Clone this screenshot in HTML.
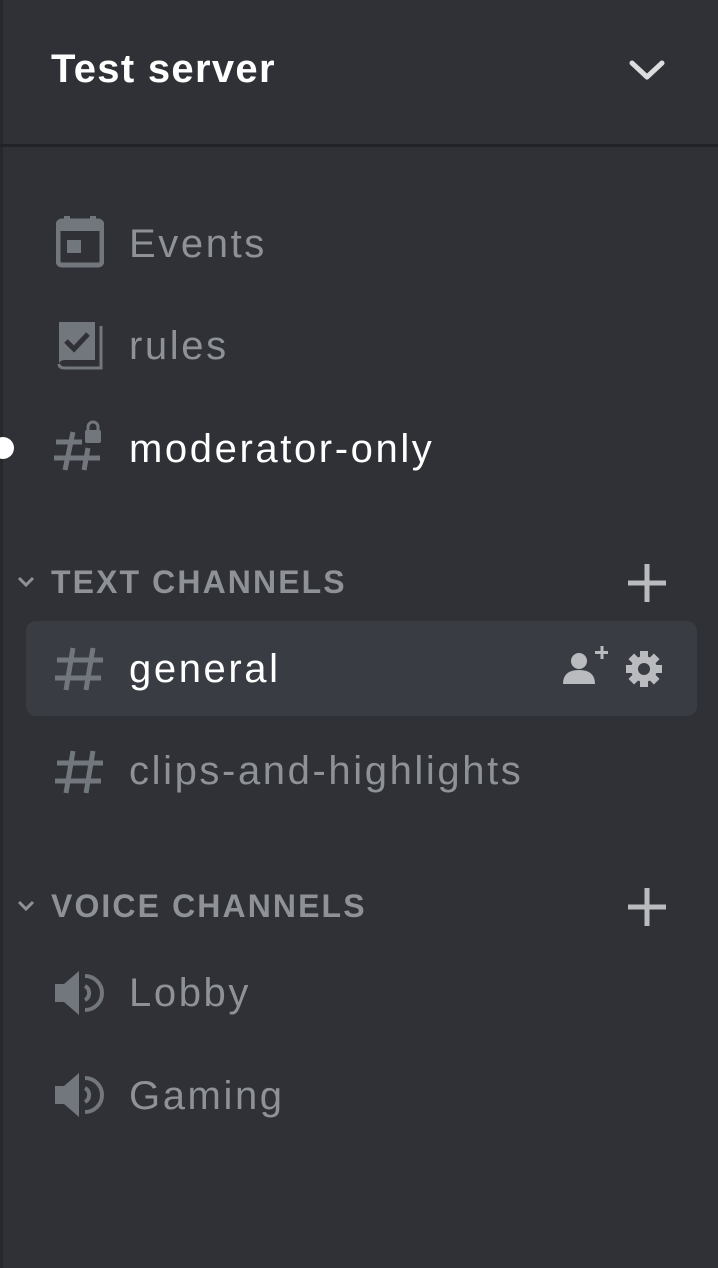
<!DOCTYPE html>
<html><head><meta charset="utf-8"><style>
html,body{margin:0;padding:0}
body{width:718px;height:1268px;background:#2f3136;position:relative;overflow:hidden;font-family:"Liberation Sans",sans-serif}
.lb{position:absolute;left:0;top:0;width:3px;height:1268px;background:#26282c}
.hdr{position:absolute;left:0;top:0;width:718px;height:144px;border-bottom:3px solid #202225}
.t{position:absolute;white-space:nowrap}
.title{left:51px;top:47px;font-size:40px;font-weight:bold;color:#fff;letter-spacing:1.3px}
.ch{font-size:40px;color:#8e9297;left:129px;line-height:46px;letter-spacing:2.6px}
.cat{font-size:32px;font-weight:bold;color:#8e9297;left:51px;line-height:36px;letter-spacing:2.1px}
.ic{position:absolute}
.sel{position:absolute;left:26px;top:621px;width:671px;height:95px;border-radius:10px;background:#393c43}
</style></head><body>
<div class="lb"></div>
<div class="hdr"></div>
<div class="t title">Test server</div>
<svg class="ic" style="left:628px;top:58px" width="38" height="26" viewBox="0 0 38 26"><path d="M4 5 L19 19 L34 5" stroke="#dcddde" stroke-width="5" fill="none" stroke-linecap="round" stroke-linejoin="round"/></svg>

<svg class="ic" style="left:56px;top:214px" width="48" height="54" viewBox="0 0 48 54"><rect x="2" y="7" width="44" height="44" rx="4" fill="none" stroke="#72767d" stroke-width="5"/><rect x="2" y="7" width="44" height="10" fill="#72767d"/><rect x="8" y="2" width="6" height="8" fill="#72767d"/><rect x="34" y="2" width="6" height="8" fill="#72767d"/><rect x="11" y="26" width="14" height="13" fill="#72767d"/></svg>
<div class="t ch" style="top:221px">Events</div>

<svg class="ic" style="left:57px;top:320px" width="46" height="50" viewBox="0 0 46 50"><path d="M2 2 H38 V40 H8 Q2 40 2 45 Z" fill="#72767d"/><path d="M2 44 Q2 48 8 48 H44 V6" stroke="#72767d" stroke-width="3" fill="none"/><path d="M9 21 L17 29 L31 14" stroke="#2f3136" stroke-width="5" fill="none"/></svg>
<div class="t ch" style="top:323px">rules</div>

<div style="position:absolute;left:-8px;top:437px;width:22px;height:22px;border-radius:50%;background:#fff"></div>
<svg class="ic" style="left:54px;top:420px" width="52" height="52" viewBox="0 0 52 52"><g stroke="#72767d" stroke-width="5" fill="none"><path d="M19 12 L11 50"/><path d="M34 28 L30 50"/><path d="M2 22 H28"/><path d="M0 38 H46"/></g><rect x="31" y="10" width="16" height="13" rx="2" fill="#72767d"/><path d="M34 11 V7 A5 5 0 0 1 44 7 V11" stroke="#72767d" stroke-width="3" fill="none"/></svg>
<div class="t ch" style="top:426px;color:#fff">moderator-only</div>

<svg class="ic" style="left:17px;top:576px" width="18" height="12" viewBox="0 0 18 12"><path d="M2 2 L9 9 L16 2" stroke="#8e9297" stroke-width="3" fill="none"/></svg>
<div class="t cat" style="top:564px">TEXT CHANNELS</div>
<svg class="ic" style="left:628px;top:564px" width="38" height="38" viewBox="0 0 38 38"><path d="M19 0 V38 M0 19 H38" stroke="#b9bbbe" stroke-width="5"/></svg>

<div class="sel"></div>
<svg class="ic" style="left:55px;top:646px" width="50" height="46" viewBox="0 0 50 46"><g stroke="#72767d" stroke-width="5" fill="none"><path d="M18 2 L11 44"/><path d="M38 2 L31 44"/><path d="M2 14 H48"/><path d="M0 32 H46"/></g></svg>
<div class="t ch" style="top:646px;color:#fff">general</div>
<svg class="ic" style="left:562px;top:644px" width="48" height="42" viewBox="0 0 48 42"><circle cx="17" cy="17" r="8" fill="#b9bbbe"/><path d="M1 40 Q1 26 17 26 Q33 26 33 40 Z" fill="#b9bbbe"/><path d="M40 2 V15 M33 8.5 H46" stroke="#b9bbbe" stroke-width="3"/></svg>
<svg class="ic" style="left:626px;top:651px" width="36" height="36" viewBox="0 0 36 36"><g fill="#b9bbbe"><circle cx="18" cy="18" r="13"/><rect x="14" y="0" width="8" height="36"/><rect x="0" y="14" width="36" height="8"/><rect x="14" y="0" width="8" height="36" transform="rotate(45 18 18)"/><rect x="14" y="0" width="8" height="36" transform="rotate(-45 18 18)"/></g><circle cx="18" cy="18" r="6" fill="#393c43"/></svg>

<svg class="ic" style="left:55px;top:749px" width="50" height="46" viewBox="0 0 50 46"><g stroke="#72767d" stroke-width="5" fill="none"><path d="M18 2 L11 44"/><path d="M38 2 L31 44"/><path d="M2 14 H48"/><path d="M0 32 H46"/></g></svg>
<div class="t ch" style="top:748px">clips-and-highlights</div>

<svg class="ic" style="left:17px;top:900px" width="18" height="12" viewBox="0 0 18 12"><path d="M2 2 L9 9 L16 2" stroke="#8e9297" stroke-width="3" fill="none"/></svg>
<div class="t cat" style="top:888px">VOICE CHANNELS</div>
<svg class="ic" style="left:628px;top:888px" width="38" height="38" viewBox="0 0 38 38"><path d="M19 0 V38 M0 19 H38" stroke="#b9bbbe" stroke-width="5"/></svg>

<svg class="ic" style="left:54px;top:970px" width="50" height="46" viewBox="0 0 50 46"><path d="M1 14 H10 L25 1 V45 L10 32 H1 Z" fill="#72767d"/><path d="M31 16 A8 8 0 0 1 31 30" stroke="#72767d" stroke-width="4" fill="none"/><path d="M31 6 A17 17 0 0 1 31 40" stroke="#72767d" stroke-width="4" fill="none"/></svg>
<div class="t ch" style="top:970px">Lobby</div>
<svg class="ic" style="left:54px;top:1072px" width="50" height="46" viewBox="0 0 50 46"><path d="M1 14 H10 L25 1 V45 L10 32 H1 Z" fill="#72767d"/><path d="M31 16 A8 8 0 0 1 31 30" stroke="#72767d" stroke-width="4" fill="none"/><path d="M31 6 A17 17 0 0 1 31 40" stroke="#72767d" stroke-width="4" fill="none"/></svg>
<div class="t ch" style="top:1073px">Gaming</div>
</body></html>
